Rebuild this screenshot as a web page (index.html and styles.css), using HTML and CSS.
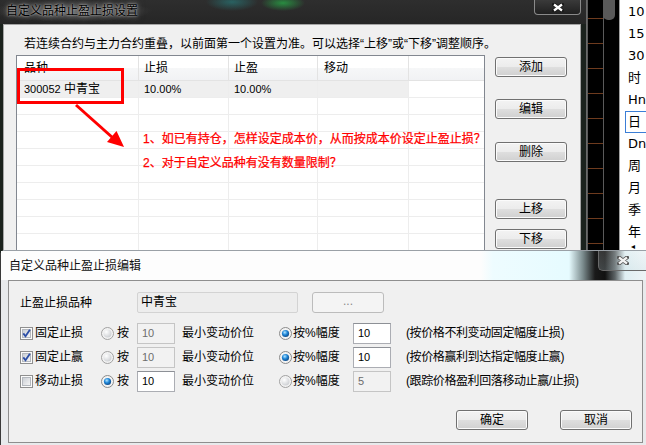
FILE: index.html
```html
<!DOCTYPE html>
<html lang="zh-CN">
<head>
<meta charset="utf-8">
<title>自定义品种止盈止损设置</title>
<link rel="stylesheet" href="styles.css">
</head>
<body>
<svg class="defs" width="0" height="0" aria-hidden="true">
  <defs>
    <linearGradient id="cbg" x1="0" y1="0" x2="1" y2="1">
      <stop offset="0" stop-color="#c9cdd3"/>
      <stop offset="1" stop-color="#f7f7f7"/>
    </linearGradient>
    <radialGradient id="rbg" cx="0.35" cy="0.3" r="0.8">
      <stop offset="0" stop-color="#ffffff"/>
      <stop offset="1" stop-color="#c9ccd0"/>
    </radialGradient>
    <radialGradient id="rdot" cx="0.4" cy="0.35" r="0.75">
      <stop offset="0" stop-color="#b5e6ff"/>
      <stop offset="0.45" stop-color="#1e86d8"/>
      <stop offset="1" stop-color="#0b3a72"/>
    </radialGradient>
  </defs>
</svg>
<div class="desktop">
  <div class="chart">
    <div class="scale"></div>
    <div class="thumb"></div>
  </div>
  <div class="periods">
    <div class="p">10</div>
    <div class="p">15</div>
    <div class="p">30</div>
    <div class="p">时</div>
    <div class="p">Hn</div>
    <div class="p cur">日</div>
    <div class="p">Dn</div>
    <div class="p">周</div>
    <div class="p">月</div>
    <div class="p">季</div>
    <div class="p">年</div>
    <div class="p tri">◂</div>
  </div>

  <div class="win1">
    <div class="tb1">
      <span class="title1">自定义品种止盈止损设置</span>
      <div class="close1">
        <svg width="12" height="9" viewBox="0 0 12 9"><path d="M2 1.5L10 7.5M10 1.5L2 7.5" stroke="#1a1a1a" stroke-width="4" stroke-linecap="round"/><path d="M2 1.5L10 7.5M10 1.5L2 7.5" stroke="#ffffff" stroke-width="2.2"/></svg>
      </div>
    </div>
    <div class="client1">
      <p class="note">若连续合约与主力合约重叠，以前面第一个设置为准。可以选择“上移”或“下移”调整顺序。</p>
      <div class="main1">
        <div class="list">
          <div class="lrow lhead"><div class="c c1">品种</div><div class="c c2">止损</div><div class="c c3">止盈</div><div class="c c4">移动</div><div class="c c5"></div></div>
          <div class="lrow sel"><div class="c c1"><span class="num">300052</span> 中青宝</div><div class="c c2"><span class="num">10.00%</span></div><div class="c c3"><span class="num">10.00%</span></div><div class="c c4"></div><div class="c c5"></div></div>
          <div class="lrow"><div class="c c1"></div><div class="c c2"></div><div class="c c3"></div><div class="c c4"></div><div class="c c5"></div></div>
          <div class="lrow"><div class="c c1"></div><div class="c c2"></div><div class="c c3"></div><div class="c c4"></div><div class="c c5"></div></div>
          <div class="lrow"><div class="c c1"></div><div class="c c2"></div><div class="c c3"></div><div class="c c4"></div><div class="c c5"></div></div>
          <div class="lrow"><div class="c c1"></div><div class="c c2"></div><div class="c c3"></div><div class="c c4"></div><div class="c c5"></div></div>
          <div class="lrow"><div class="c c1"></div><div class="c c2"></div><div class="c c3"></div><div class="c c4"></div><div class="c c5"></div></div>
          <div class="lrow"><div class="c c1"></div><div class="c c2"></div><div class="c c3"></div><div class="c c4"></div><div class="c c5"></div></div>
          <div class="lrow"><div class="c c1"></div><div class="c c2"></div><div class="c c3"></div><div class="c c4"></div><div class="c c5"></div></div>
          <div class="lrow"><div class="c c1"></div><div class="c c2"></div><div class="c c3"></div><div class="c c4"></div><div class="c c5"></div></div>
          <div class="lrow"><div class="c c1"></div><div class="c c2"></div><div class="c c3"></div><div class="c c4"></div><div class="c c5"></div></div>
        </div>
        <div class="btns">
          <div class="btn b-add">添加</div>
          <div class="btn b-edit">编辑</div>
          <div class="btn b-del">删除</div>
          <div class="btn b-up">上移</div>
          <div class="btn b-down">下移</div>
        </div>
      </div>
    </div>
  </div>

  <div class="mark"></div>
  <svg class="arrow" width="140" height="160" viewBox="0 0 140 160">
    <line x1="76" y1="105" x2="113" y2="138" stroke="#ff0000" stroke-width="3"/>
    <polygon points="124,147 107,142 116.5,131" fill="#ff0000"/>
  </svg>
  <div class="q q1">1、如已有持仓，怎样设定成本价，从而按成本价设定止盈止损？</div>
  <div class="q q2">2、对于自定义品种有没有数量限制？</div>

  <div class="win2">
    <div class="tb2">
      <span class="title2">自定义品种止盈止损编辑</span>
      <div class="close2">
        <svg width="12" height="9" viewBox="0 0 12 9"><path d="M2 1.5L10 7.5M10 1.5L2 7.5" stroke="#555" stroke-width="4" stroke-linecap="round"/><path d="M2 1.5L10 7.5M10 1.5L2 7.5" stroke="#f2f2f2" stroke-width="2.2"/></svg>
      </div>
    </div>
    <div class="client2">
      <div class="row0">
        <div class="lab0">止盈止损品种</div>
        <div class="ro">中青宝</div>
        <div class="dots">...</div>
      </div>
      <div class="opts">
        <div class="ck"><svg width="13" height="13" viewBox="0 0 13 13"><rect x=".5" y=".5" width="12" height="12" fill="#fbfbfb" stroke="#8f8f8f"/><rect x="2.5" y="2.5" width="8" height="8" fill="url(#cbg)" stroke="#b4b8be"/><path d="M3.3 6.4l2.2 2.9 4.4-6.6" fill="none" stroke="#2c4ea6" stroke-width="1.8"/></svg><span>固定止损</span></div>
        <div class="rd"><svg width="13" height="13" viewBox="0 0 13 13"><circle cx="6.5" cy="6.5" r="6" fill="#f3f3f3" stroke="#a0a0a0"/><circle cx="6.5" cy="6.5" r="4" fill="url(#rbg)"/></svg><span>按</span></div>
        <div class="tx dis">10</div>
        <div class="lbl2">最小变动价位</div>
        <div class="rd r2"><svg width="13" height="13" viewBox="0 0 13 13"><circle cx="6.5" cy="6.5" r="6" fill="#f3f3f3" stroke="#8a8a8a"/><circle cx="6.5" cy="6.5" r="3.6" fill="url(#rdot)"/></svg><span>按%幅度</span></div>
        <div class="tx">10</div>
        <div class="hint">(按价格不利变动固定幅度止损)</div>

        <div class="ck"><svg width="13" height="13" viewBox="0 0 13 13"><rect x=".5" y=".5" width="12" height="12" fill="#fbfbfb" stroke="#8f8f8f"/><rect x="2.5" y="2.5" width="8" height="8" fill="url(#cbg)" stroke="#b4b8be"/><path d="M3.3 6.4l2.2 2.9 4.4-6.6" fill="none" stroke="#2c4ea6" stroke-width="1.8"/></svg><span>固定止赢</span></div>
        <div class="rd"><svg width="13" height="13" viewBox="0 0 13 13"><circle cx="6.5" cy="6.5" r="6" fill="#f3f3f3" stroke="#a0a0a0"/><circle cx="6.5" cy="6.5" r="4" fill="url(#rbg)"/></svg><span>按</span></div>
        <div class="tx dis">10</div>
        <div class="lbl2">最小变动价位</div>
        <div class="rd r2"><svg width="13" height="13" viewBox="0 0 13 13"><circle cx="6.5" cy="6.5" r="6" fill="#f3f3f3" stroke="#8a8a8a"/><circle cx="6.5" cy="6.5" r="3.6" fill="url(#rdot)"/></svg><span>按%幅度</span></div>
        <div class="tx">10</div>
        <div class="hint">(按价格赢利到达指定幅度止赢)</div>

        <div class="ck"><svg width="13" height="13" viewBox="0 0 13 13"><rect x=".5" y=".5" width="12" height="12" fill="#fbfbfb" stroke="#8f8f8f"/><rect x="2.5" y="2.5" width="8" height="8" fill="url(#cbg)" stroke="#b4b8be"/></svg><span>移动止损</span></div>
        <div class="rd"><svg width="13" height="13" viewBox="0 0 13 13"><circle cx="6.5" cy="6.5" r="6" fill="#f3f3f3" stroke="#8a8a8a"/><circle cx="6.5" cy="6.5" r="3.6" fill="url(#rdot)"/></svg><span>按</span></div>
        <div class="tx">10</div>
        <div class="lbl2">最小变动价位</div>
        <div class="rd r2"><svg width="13" height="13" viewBox="0 0 13 13"><circle cx="6.5" cy="6.5" r="6" fill="#f3f3f3" stroke="#a0a0a0"/><circle cx="6.5" cy="6.5" r="4" fill="url(#rbg)"/></svg><span>按%幅度</span></div>
        <div class="tx dis">5</div>
        <div class="hint">(跟踪价格盈利回落移动止赢/止损)</div>
      </div>
      <div class="foot">
        <div class="btn">确定</div>
        <div class="btn">取消</div>
      </div>
    </div>
  </div>
</div>
</body>
</html>
```
FILE: styles.css
```css
* { box-sizing: border-box; margin: 0; padding: 0; }
html, body { width: 646px; height: 445px; overflow: hidden; }
body {
  background: #000;
  font: 12px/16px "Liberation Sans", "Noto Sans CJK SC", sans-serif;
  color: #000;
}
.defs { position: absolute; width: 0; height: 0; }
.desktop { position: relative; width: 646px; height: 445px; overflow: hidden; background: #000; }

/* chart background */
.chart { position: absolute; left: 0; top: 0; width: 620px; height: 445px; background: #000; }
.scale {
  position: absolute; left: 587px; top: 0; width: 17px; height: 445px;
  border-left: 1px solid #5a5a5a; border-right: 1px solid #5a5a5a;
  background: repeating-linear-gradient(to bottom, transparent 0, transparent 18px, #6e3b1e 18px, #6e3b1e 19px, transparent 19px, transparent 25px);
}
.thumb { position: absolute; left: 603px; top: 0; width: 12px; height: 20px; background: #595959; border-radius: 0 0 5px 5px; }

/* period strip */
.periods {
  position: absolute; left: 619px; top: 0; width: 27px; height: 445px;
  background: #fff; border-left: 1px solid #a0a0a0; padding-top: 1px;
  font: 13px/22px "DejaVu Sans", "Noto Sans CJK SC", sans-serif; color: #000;
}
.p { height: 22px; padding-left: 8px; white-space: nowrap; }
.p.cur { border: 1px solid #3b7ed6; border-right: none; margin-left: 5px; padding-left: 2px; line-height: 20px; }
.p.tri { font-size: 8px; line-height: 8px; height: 10px; padding-left: 11px; }

/* window 1 */
.win1 { position: absolute; left: 0; top: 0; width: 587px; height: 262px; background: #1b221d; border-right: 1px solid #6a6a6a; }
.tb1 {
  height: 24px; display: flex; align-items: flex-start; padding-left: 6px;
  background:
    radial-gradient(ellipse 26px 9px at 232px 2px, rgba(40, 115, 115, .75), transparent),
    radial-gradient(ellipse 22px 8px at 283px 3px, rgba(40, 165, 70, .8), transparent),
    radial-gradient(ellipse 80px 11px at 72px 11px, rgba(110, 110, 110, .75), transparent),
    linear-gradient(#2e2e2e, #262626);
}
.title1 { line-height: 22px; color: #000; text-shadow: 0 0 2px rgba(230, 230, 230, .8), 0 0 5px rgba(200, 200, 200, .6), 0 0 9px rgba(160, 160, 160, .5); white-space: nowrap; }
.close1 {
  margin-left: auto; margin-right: 5px; width: 47px; height: 15px;
  border: 1px solid #8a8a8a; border-top: none; border-radius: 0 0 4px 4px;
  background: linear-gradient(#3a3a3a, #202020);
  display: flex; align-items: center; justify-content: center;
}
.client1 { margin-left: 3px; width: 578px; height: 238px; background: #f0f0f0; border: 1px solid #a5a5a5; border-bottom: none; }
.note { padding: 11px 0 0 20px; line-height: 16px; white-space: nowrap; }
.main1 { display: flex; margin-top: 3px; padding-left: 12px; }
.list { width: 469px; height: 210px; border: 1px solid #828790; background: #fff; overflow: hidden; flex: none; }
.lrow { display: flex; height: 17px; border-bottom: 1px solid #ededed; }
.lhead { height: 25px; border-bottom: 1px solid #e3e3e3; background: linear-gradient(#ffffff, #ffffff 50%, #f6f7f8 50%, #f1f2f4); }
.c { border-right: 1px solid #ededed; padding-left: 6px; line-height: 16px; white-space: nowrap; flex: none; }
.lhead .c { border-right-color: #e3e3e3; line-height: 24px; }
.c1 { width: 122px; padding-left: 7px; }
.c2 { width: 90px; padding-left: 5px; }
.c3 { width: 89px; padding-left: 5px; }
.c4 { width: 91px; padding-left: 6px; }
.c5 { flex: 1; border-right: none; }
.sel .c1, .sel .c2, .sel .c3, .sel .c4 { background: #efefef; }
.num { font-size: 11px; }

.btns { margin-left: 10px; display: flex; flex-direction: column; width: 72px; flex: none; }
.btn {
  height: 20px; width: 72px; border: 1px solid #707070; border-radius: 3px;
  background: linear-gradient(#f3f3f3, #ececec 48%, #dedede 52%, #d0d0d0);
  box-shadow: inset 0 0 0 1px #fbfbfb;
  text-align: center; line-height: 18px; white-space: nowrap;
}
.b-add { margin-top: 2px; }
.b-edit { margin-top: 22px; }
.b-del { margin-top: 23px; }
.b-up { margin-top: 37px; }
.b-down { margin-top: 10px; }

/* annotations */
.mark { position: absolute; left: 17px; top: 68px; width: 107px; height: 36px; border: 3px solid #ff0000; }
.arrow { position: absolute; left: 0; top: 0; }
.q { position: absolute; left: 143px; color: #ff0000; white-space: nowrap; line-height: 16px; -webkit-text-stroke: 0.25px #ff0000; }
.q1 { top: 131px; }
.q2 { top: 155px; }

/* window 2 */
.win2 {
  position: absolute; left: 0; top: 250px; width: 646px; height: 195px;
  background: #e8eaec; border-left: 1px solid #3a3a3a; border-top: 1px solid #9aa0a6;
  border-radius: 5px 0 0 0;
}
.tb2 {
  height: 29px; display: flex; align-items: flex-start; padding-left: 8px;
  background: linear-gradient(to right, #fdfdfd 0, #fdfdfd 480px, #eefcff 492px, #e6fbff 568px, #7a8a8c 582px, #1a1a1a 594px, #111 604px, #5d6466 614px, #dfeef2 624px, #eef4f6 646px);
}
.title2 { line-height: 30px; color: #111; text-shadow: 0 0 5px rgba(255, 255, 255, .9); white-space: nowrap; }
.close2 {
  margin-left: auto; margin-right: 0; width: 48px; height: 20px;
  border: 1px solid #6a6a6a; border-top: none; border-right: none; border-radius: 0 0 0 5px;
  background: linear-gradient(rgba(255, 255, 255, .15), rgba(200, 220, 225, .25));
  display: flex; align-items: center; justify-content: center;
}
.client2 { margin-left: 7px; width: 635px; height: 163px; background: #f0f0f0; border: 1px solid #8e8e8e; }
.row0 { display: flex; align-items: center; height: 21px; margin-top: 11px; padding-left: 11px; }
.lab0 { width: 117px; white-space: nowrap; }
.ro { width: 161px; height: 21px; border: 1px solid #d3d3d3; border-radius: 2px; background: #ededed; padding-left: 3px; line-height: 19px; }
.dots { margin-left: 14px; width: 72px; height: 21px; border: 1px solid #bcbcbc; border-radius: 3px; background: #f4f4f4; color: #8a8a8a; text-align: center; line-height: 17px; }
.opts {
  margin-top: 8px; padding-left: 11px; display: grid;
  grid-template-columns: 81px 36px 38px 104px 74px 38px auto;
  grid-auto-rows: 24px; align-items: center;
}
.ck { display: flex; align-items: center; gap: 2px; white-space: nowrap; }
.rd { display: flex; align-items: center; gap: 3px; white-space: nowrap; }
.rd.r2 { gap: 1px; }
.tx { height: 21px; width: 38px; border: 1px solid #abadb3; border-top-color: #8d9096; background: #fff; padding-left: 4px; font-size: 11px; line-height: 19px; }
.tx.dis { background: #f2f2f2; border-color: #c5c5c5; color: #6d6d6d; }
.lbl2 { padding-left: 7px; white-space: nowrap; }
.hint { padding-left: 15px; white-space: nowrap; letter-spacing: -0.4px; }
.foot { display: flex; justify-content: flex-end; gap: 32px; margin-top: 17px; padding-right: 10px; }
```
